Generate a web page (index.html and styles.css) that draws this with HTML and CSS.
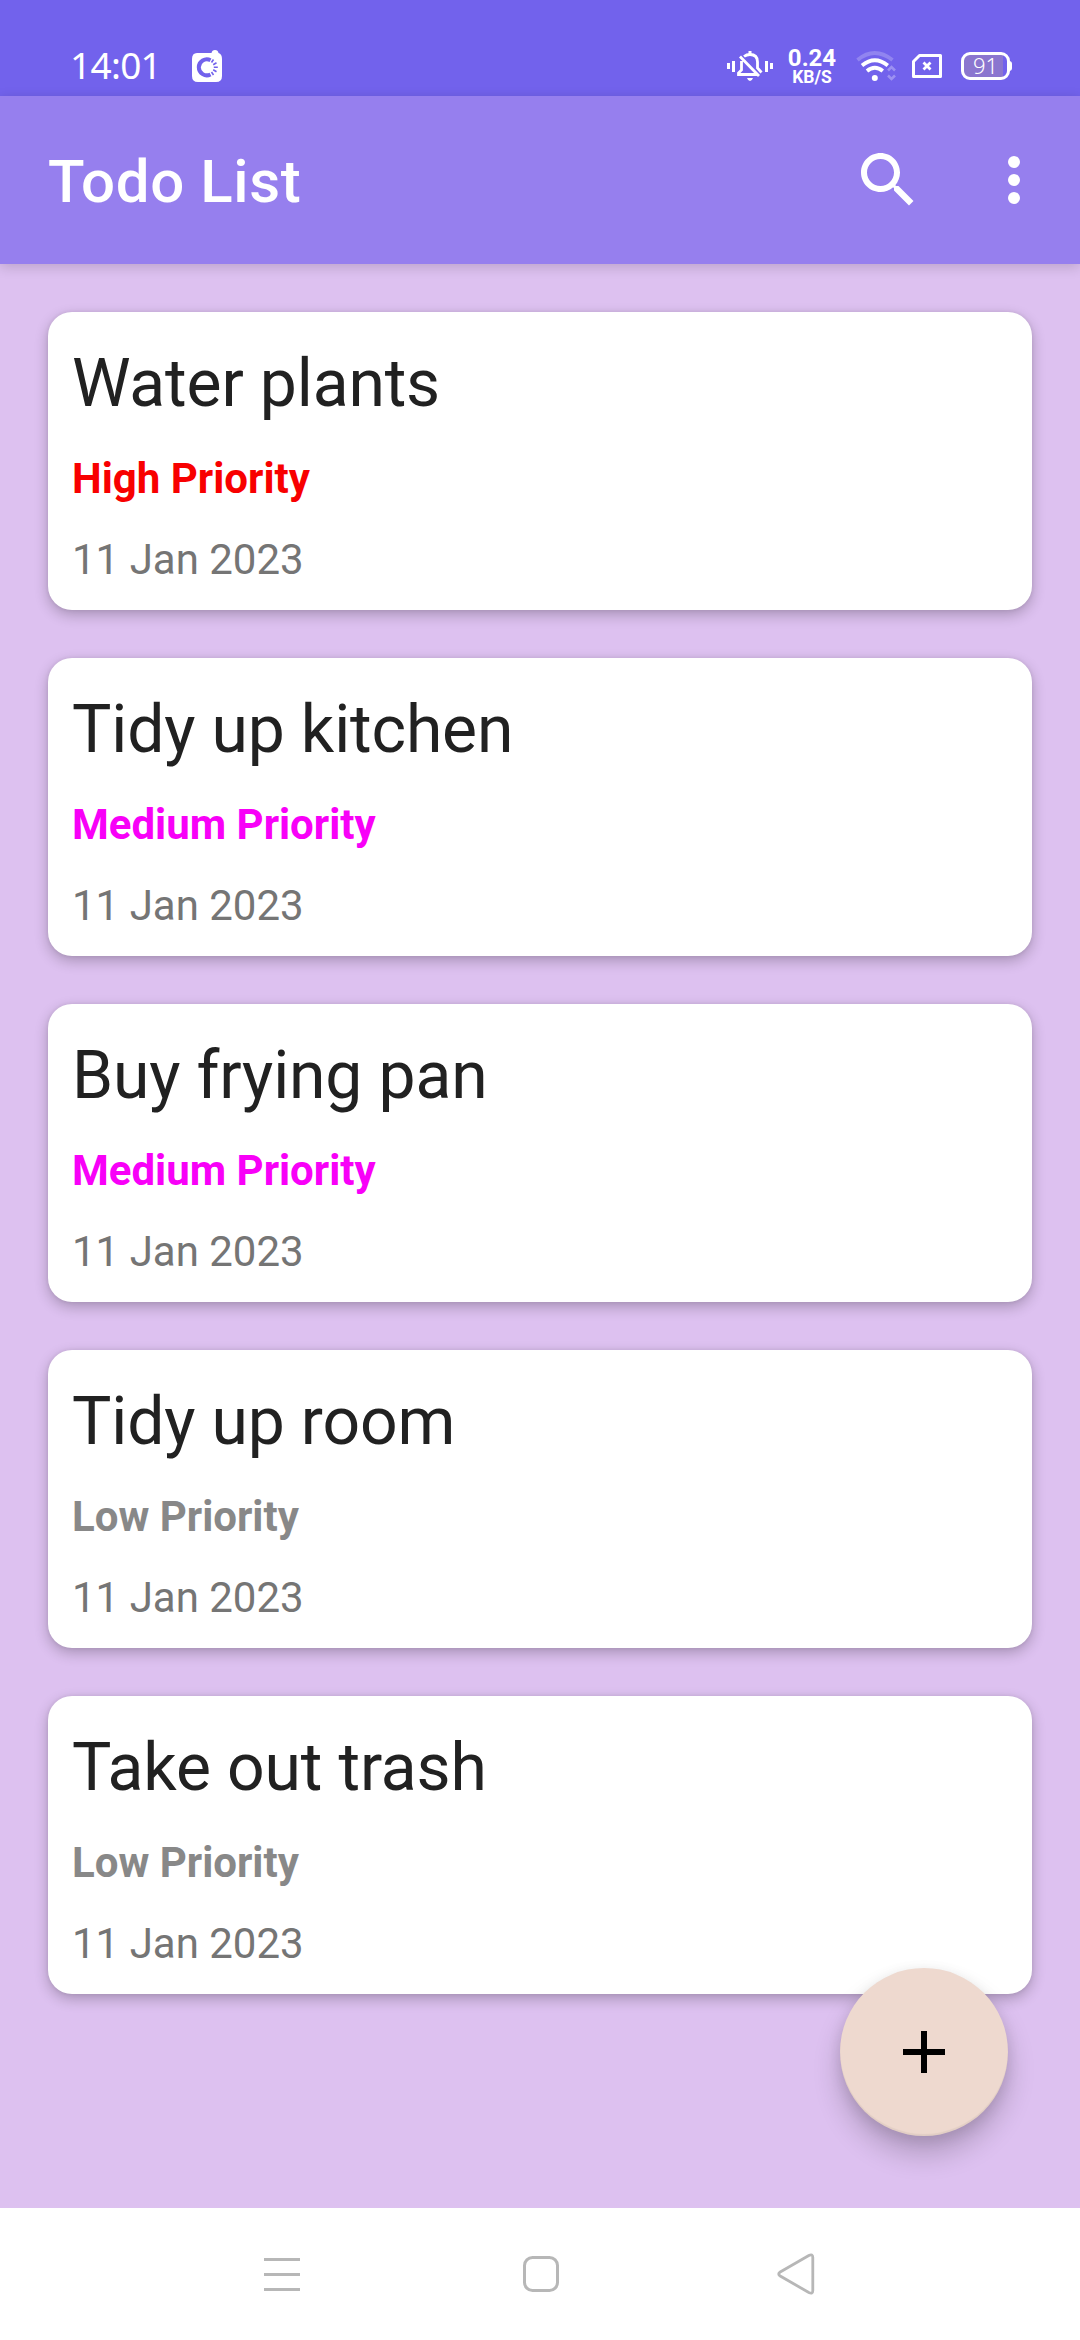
FILE: index.html
```html
<!DOCTYPE html>
<html lang="en">
<head>
<meta charset="utf-8">
<title>Todo List</title>
<link rel="stylesheet" href="styles.css">
</head>
<body>
<div class="screen">
  <div class="status-bar">
    <span class="clock">14:01</span>
    <svg class="app-badge" width="32" height="34" viewBox="0 0 32 34">
      <path fill="#fff" d="M6 3H20.500Q21 0 24 0Q27 0 27.500 3Q31 4 31 9V26Q31 32 25 32H7Q1 32 1 26V9Q1 3 6 3Z"/>
      <path fill="none" stroke="#7262ec" stroke-width="4" d="M19.500 10.200A8 8 0 1 0 19.500 24.400"/>
      <path stroke="#7262ec" stroke-width="1.600" d="M20.500 12.500l2-3M22.200 14.800l3.300-2M22.800 17.300h4M22.200 19.800l3.300 2M20.500 22l2 3"/>
    </svg>
    <svg class="mute" width="46" height="34" viewBox="0 0 46 34">
      <g fill="none" stroke="#fff" stroke-width="3">
        <path d="M1.500 13v6M6.500 11v11M39.500 11v11M44.500 13v6"/>
        <path d="M14.500 11V20L11.500 23V24.500H30M17 6.500Q19.500 4.500 23 4.500Q30.500 4.500 30.500 12V18L34.500 22.500M13 6.500L32 26" stroke-width="2.800"/>
      </g>
      <path fill="#fff" d="M21.500 1h3v4h-3zM20 28h6q-1 3-3 3t-3-3z"/>
    </svg>
    <div class="speed"><span class="speed-value">0.24</span><span class="speed-unit">KB/S</span></div>
    <svg class="wifi" width="40" height="34" viewBox="0 0 40 34">
      <g fill="none" stroke="#fff" stroke-width="3.800">
        <path d="M1.500 10Q18.500-4 36.500 10" opacity=".22"/>
        <path d="M6 15.500Q18.800 5 31.800 15.500M11 21Q18.800 14.500 26.800 21"/>
        <path d="M32 20.500l3.500-3.500 3.500 3.500M32 25.500l3.500 3.500 3.500-3.500" stroke-width="2.500" opacity=".3"/>
      </g>
      <circle cx="18.800" cy="28" r="3" fill="#fff"/>
    </svg>
    <svg class="sim" width="30" height="26" viewBox="0 0 30 26">
      <path fill="none" stroke="#fff" stroke-width="3" stroke-linejoin="round" d="M7.500 2.500H28.500V23.500H1.500V8.500Z"/>
      <path stroke="#fff" stroke-width="2.800" d="M11.500 9.500l7 7M18.500 9.500l-7 7"/>
    </svg>
    <div class="battery"><span class="battery-level">91</span></div>
  </div>
  <header class="app-bar">
    <h1 class="app-title">Todo List</h1>
    <svg class="search" width="72" height="72" viewBox="0 0 24 24"><path fill="#fff" d="M15.500 14h-.79l-.28-.27C15.410 12.590 16 11.110 16 9.500 16 5.910 13.090 3 9.500 3S3 5.910 3 9.500 5.910 16 9.500 16c1.610 0 3.090-.59 4.230-1.570l.27.28v.79l5 4.990L20.490 19l-4.990-5zm-6 0C7.010 14 5 11.990 5 9.500S7.010 5 9.500 5 14 7.010 14 9.500 11.990 14 9.500 14z"/></svg>
    <svg class="more" width="72" height="72" viewBox="0 0 24 24"><g fill="#fff"><circle cx="12" cy="6" r="2"/><circle cx="12" cy="12" r="2"/><circle cx="12" cy="18" r="2"/></g></svg>
  </header>
  <main class="list">
    <article class="card"><h2 class="task">Water plants</h2><p class="priority high">High Priority</p><p class="date">11 Jan 2023</p></article>
    <article class="card"><h2 class="task">Tidy up kitchen</h2><p class="priority medium">Medium Priority</p><p class="date">11 Jan 2023</p></article>
    <article class="card"><h2 class="task">Buy frying pan</h2><p class="priority medium">Medium Priority</p><p class="date">11 Jan 2023</p></article>
    <article class="card"><h2 class="task">Tidy up room</h2><p class="priority low">Low Priority</p><p class="date">11 Jan 2023</p></article>
    <article class="card"><h2 class="task">Take out trash</h2><p class="priority low">Low Priority</p><p class="date">11 Jan 2023</p></article>
    <button class="fab" aria-label="Add task"><svg width="72" height="72" viewBox="0 0 24 24"><path d="M19 13h-6v6h-2v-6H5v-2h6V5h2v6h6v2z"/></svg></button>
  </main>
  <nav class="nav-bar">
    <svg width="50" height="50" viewBox="0 0 50 50"><path stroke="#b7b7b7" stroke-width="3" d="M7 10.500h36M7 25.500h36M7 40.500h36"/></svg>
    <svg width="50" height="50" viewBox="0 0 50 50"><rect x="8.500" y="8.500" width="33" height="33" rx="8" fill="none" stroke="#b7b7b7" stroke-width="3"/></svg>
    <svg width="50" height="50" viewBox="0 0 50 50"><path fill="none" stroke="#b7b7b7" stroke-width="2.800" d="M5.200 23L33.800 6.500Q37.800 4.500 37.800 8.500V41.500Q37.800 45.500 33.800 43.500L5.200 27Q2.200 25 5.200 23Z"/></svg>
  </nav>
</div>
</body>
</html>
```
FILE: styles.css
```css
* { box-sizing: border-box; }
body, h1, h2, p { margin: 0; font-weight: 400; }
body { font-family: Roboto, "Liberation Sans", sans-serif; }
svg { display: block; flex: none; }

.screen { display: flex; flex-direction: column; width: 1080px; height: 2340px; overflow: hidden; background: #ddc1f0; }

.status-bar { display: flex; align-items: flex-start; height: 96px; padding: 0 70px; background: #7262ec; color: #fff; }
.clock { width: 121px; margin-top: 40px; font: 400 37px/50px "Noto Sans", sans-serif; letter-spacing: -0.7px; }
.app-badge { margin-top: 50px; }
.mute { margin: 50px 13px 0 auto; }
.speed { display: flex; flex-direction: column; align-items: center; width: 52px; margin: 47px 18px 0 0; font-weight: 700; }
.speed-value { font-size: 24px; line-height: 22px; }
.speed-unit { font-size: 17.500px; line-height: 16px; }
.wifi { margin: 50px 16px 0 0; }
.sim { margin: 53px 19px 0 0; }
.battery { position: relative; width: 49px; height: 28px; margin-top: 52px; border: 3px solid #fff; border-radius: 9px; background: linear-gradient(90deg, #8b76cf 90%, #7262ec 90%); display: flex; justify-content: center; }
.battery::after { content: ""; position: absolute; left: 45px; top: 6px; width: 3px; height: 10px; border-radius: 0 3px 3px 0; background: #fff; }
.battery-level { margin-top: -1px; font: 300 22px/22px "Noto Sans", sans-serif; }

.app-bar { position: relative; z-index: 1; display: flex; align-items: center; height: 168px; padding: 0 30px 0 48px; background: #967fee; color: #fff; box-shadow: 0 3px 12px rgba(0, 0, 0, .16); }
.app-title { flex: 1; margin-top: 4px; font-size: 60px; font-weight: 500; line-height: 70px; letter-spacing: 0.6px; }
.search { margin-right: 54px; }

.list { position: relative; flex: 1; display: flex; flex-direction: column; gap: 48px; padding: 48px; }
.card { height: 298px; padding: 27px 24px 24px; border-radius: 24px; background: #fff; box-shadow: 0 5px 14px rgba(0, 0, 0, .24), 0 0 4px rgba(0, 0, 0, .08); }
.task { color: #212121; font-size: 66px; line-height: 90px; letter-spacing: -0.15px; }
.priority { margin-top: 25px; font-size: 42px; font-weight: 700; line-height: 50px; }
.date { margin-top: 31px; color: #757575; font-size: 42px; line-height: 50px; }
.high { color: #f80000; }
.medium { color: #f800f8; }
.low { color: #888; }

.fab { position: absolute; right: 72px; bottom: 72px; display: flex; align-items: center; justify-content: center; width: 168px; height: 168px; padding: 0; border: 0; border-radius: 50%; background: #eed9cf; box-shadow: 0 18px 28px rgba(0, 0, 0, .2), 0 4px 14px rgba(0, 0, 0, .1), inset 0 -2px 1px rgba(0, 0, 0, .05); }

.nav-bar { display: flex; justify-content: space-between; height: 132px; padding: 41px 255px 0 257px; background: #fff; }
```
